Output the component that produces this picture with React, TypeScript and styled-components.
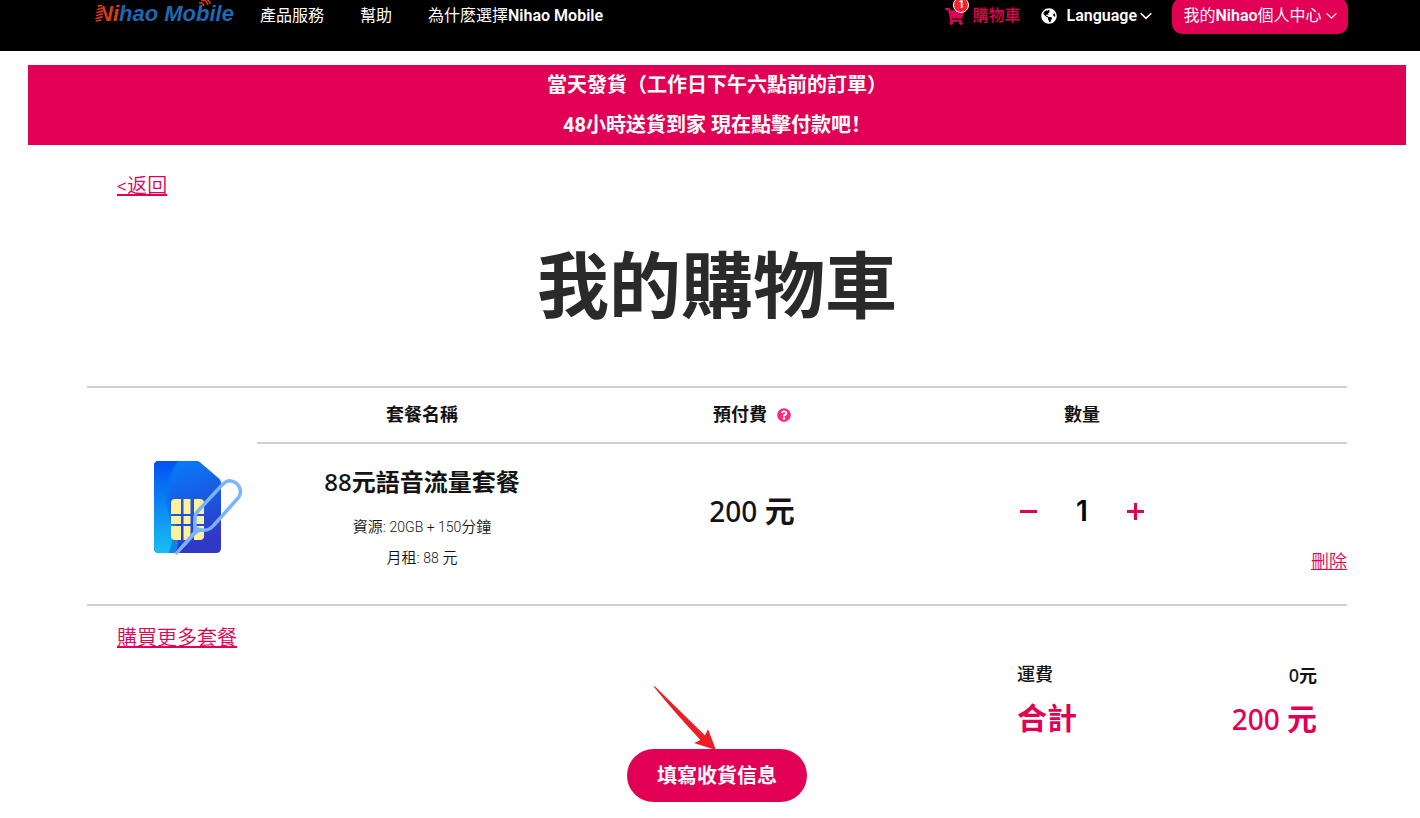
import React, { useState } from 'react';
import styled, { createGlobalStyle } from 'styled-components';
import { FaShoppingCart, FaGlobeAmericas, FaQuestionCircle } from 'react-icons/fa';

const PINK = '#e20054';
const LINE = '#d0d0d0';

const GlobalStyle = createGlobalStyle`
  *, *::before, *::after { box-sizing: border-box; }
  body {
    margin: 0;
    background: #fff;
    color: #141414;
    font-family: Roboto, "Noto Sans CJK SC", sans-serif;
    font-size: 16px;
    line-height: 24px;
  }
  button { font: inherit; color: inherit; border: 0; background: none; padding: 0; cursor: pointer; }
  h1, h2, p, dl, dd, dt { margin: 0; }
`;

const Header = styled.header`
  height: 51px;
  padding: 0 72px 0 95px;
  background: #000;
  color: #fff;
  overflow: hidden;
`;

const HeaderRow = styled.div`
  display: flex;
  align-items: center;
  height: 36px;
  margin-top: -2px;
`;

const LogoLink = styled.a`
  display: block;
  height: 30px;
  margin-right: 25px;
`;

const Nav = styled.nav`
  display: flex;
  gap: 36px;
`;

const NavLink = styled.a`
  color: #fff;
  text-decoration: none;
  white-space: nowrap;
`;

const Latin = styled.span`
  font-weight: 600;
`;

const Actions = styled.div`
  display: flex;
  align-items: center;
  margin-left: auto;
  white-space: nowrap;
`;

const CartLink = styled.a`
  position: relative;
  display: flex;
  align-items: center;
  gap: 8px;
  margin-right: 21px;
  color: ${PINK};
  font-weight: 500;
  text-decoration: none;
`;

const Badge = styled.span`
  position: absolute;
  top: -7px;
  left: 8px;
  width: 16px;
  height: 16px;
  border: 1px solid #fff;
  border-radius: 50%;
  background: #f8202c;
  color: #fff;
  font-size: 11px;
  font-weight: 600;
  line-height: 14px;
  text-align: center;
`;

const LanguageButton = styled.button`
  display: flex;
  align-items: center;
  margin-right: 20px;
  font-weight: 600;
`;

const LanguageText = styled.span`
  margin: 0 3px 0 9px;
`;

const AccountButton = styled.button`
  display: flex;
  align-items: center;
  justify-content: center;
  gap: 4px;
  width: 176px;
  height: 36px;
  border-radius: 10px;
  background: ${PINK};
`;

const Page = styled.main`
  padding: 14px 14px 16px 28px;
`;

const Banner = styled.div`
  background: ${PINK};
  color: #fff;
  font-size: 20px;
  font-weight: 700;
  line-height: 40px;
  text-align: center;
`;

const Container = styled.div`
  max-width: 1260px;
  margin: 0 auto;
`;

const LinkRow = styled.div<{ $top: number }>`
  padding: ${(p) => p.$top}px 30px 0;
  font-size: 20px;
  line-height: 24px;
`;

const PinkLink = styled.a`
  color: ${PINK};
  font-weight: 350;
  text-underline-offset: 1px;
`;

const Title = styled.h1`
  padding: 39px 0 47px;
  color: #2a2a2a;
  font-size: 72px;
  font-weight: 700;
  line-height: 102px;
  text-align: center;
`;

const CartTable = styled.table`
  width: 100%;
  border-top: 2px solid ${LINE};
  border-bottom: 2px solid ${LINE};
  border-spacing: 0;
  table-layout: fixed;
`;

const HeadCell = styled.th`
  height: 56px;
  padding: 0;
  border-bottom: 2px solid ${LINE};
  font-size: 18px;
  font-weight: 600;
  text-align: center;
`;

const HeadLabel = styled.div`
  display: flex;
  align-items: center;
  justify-content: center;
  gap: 10px;
`;

const HelpButton = styled.button`
  display: flex;
  color: #fb2a7b;
`;

const PictureCell = styled.td`
  padding: 72px 0 0 66px;
  vertical-align: top;
`;

const Cell = styled.td<{ $bottom?: number }>`
  height: 160px;
  padding: 0 0 ${(p) => p.$bottom ?? 26}px;
  text-align: center;
  vertical-align: middle;
`;

const RemoveCell = styled.td`
  padding: 0 0 30px;
  font-size: 18px;
  text-align: right;
  vertical-align: bottom;
`;

const PlanName = styled.h2`
  padding: 0 0 14px;
  font-family: "Noto Sans", "Noto Sans CJK SC", sans-serif;
  font-size: 24px;
  font-weight: 500;
  line-height: 32px;
`;

const PlanInfo = styled.p`
  font-size: 15px;
  font-weight: 350;
  line-height: 31px;
`;

const Small = styled.span`
  font-size: 14px;
  font-weight: 300;
`;

const Price = styled.span`
  font-family: "Noto Sans", sans-serif;
  font-size: 28px;
  font-weight: 500;
  line-height: 40px;
`;

const Unit = styled.span<{ $size?: number }>`
  font-family: "Noto Sans CJK SC", sans-serif;
  font-size: ${(p) => (p.$size ? `${p.$size}px` : 'inherit')};
  font-weight: 700;
  line-height: 1;
`;

const Stepper = styled.div`
  display: flex;
  align-items: center;
  justify-content: center;
`;

const StepButton = styled.button`
  display: flex;
  color: ${PINK};
`;

const Quantity = styled.output`
  width: 90px;
  color: #000;
  font-family: Inter, sans-serif;
  font-size: 28px;
  font-weight: 600;
  line-height: 40px;
`;

const Summary = styled.dl`
  width: 300px;
  margin: 13px 30px 0 auto;
`;

const SummaryRow = styled.div<{ $total?: boolean }>`
  display: flex;
  justify-content: space-between;
  height: ${(p) => (p.$total ? 40 : 24)}px;
  color: ${(p) => (p.$total ? PINK : '#141414')};
  font-size: ${(p) => (p.$total ? 30 : 18)}px;
  font-weight: ${(p) => (p.$total ? 700 : 500)};
  line-height: ${(p) => (p.$total ? 40 : 24)}px;
  margin-bottom: ${(p) => (p.$total ? 0 : 12)}px;
`;

const Amount = styled.dd<{ $total?: boolean }>`
  font-family: "Noto Sans", sans-serif;
  font-size: ${(p) => (p.$total ? 28 : 18)}px;
  font-weight: 500;
`;

const SubmitArea = styled.div`
  position: relative;
  width: 180px;
  margin: 10px auto 0;
`;

const SubmitButton = styled.button`
  width: 100%;
  height: 53px;
  border-radius: 27px;
  background: ${PINK};
  color: #fff;
  font-size: 20px;
  font-weight: 700;
`;

const Pointer = styled.svg`
  position: absolute;
  top: -64px;
  left: 26px;
  pointer-events: none;
`;

const Logo = () => (
  <svg width="140" height="30" viewBox="0 0 140 30" overflow="visible" role="img" aria-label="Nihao Mobile">
    <text x="2" y="20" fontFamily="Liberation Sans, Arial, sans-serif" fontSize="22" fontWeight="700" fontStyle="italic">
      <tspan fill="#dc3a1a">Ni</tspan>
      <tspan fill="#1e68b4">hao Mobile</tspan>
    </text>
    <path d="M3.500 5h4M2.500 8.500l6-1.500M2 11.500l6-1.500M1.500 14.500l6-1.500M1 17.500l6-1.500M1.500 20l4-1" stroke="#dc3a1a" strokeWidth="1.800" strokeLinecap="round" />
    <path d="M1 7l7-1.500M1 10l7-1.500M1 13l6.500-1.500M0 16l7-1.500M0 19l6-1.500" stroke="#000" strokeWidth="1" />
    <path d="M104 2q4-1 5 3M106 -1q6 0 7 5M110 -2q5 1 5 5" fill="none" stroke="#dc3a1a" strokeWidth="1.500" />
  </svg>
);

const Chevron = ({ width = 12, stroke = 1.6 }: { width?: number; stroke?: number }) => (
  <svg width={width} height="8" viewBox="0 0 12 8" fill="none" stroke="currentColor" strokeWidth={stroke} aria-hidden="true">
    <path d="M.7 1.200L6 6.400l5.300-5.200" />
  </svg>
);

const SimCard = () => (
  <svg width="90" height="96" viewBox="0 0 90 96" role="img" aria-label="SIM卡">
    <defs>
      <linearGradient id="sim-body" x1="0" y1="0" x2="0.300" y2="1">
        <stop offset="0" stopColor="#0084ff" />
        <stop offset="1" stopColor="#3038c8" />
      </linearGradient>
      <linearGradient id="sim-side" x1="0" y1="0" x2="0" y2="1">
        <stop offset="0" stopColor="#0050f0" />
        <stop offset="1" stopColor="#18c0f4" />
      </linearGradient>
      <linearGradient id="sim-edge" x1="0" y1="0" x2="0" y2="1">
        <stop offset="0" stopColor="#0068f8" />
        <stop offset="1" stopColor="#1088e0" />
      </linearGradient>
      <clipPath id="sim-clip">
        <path d="M6 1H43.500Q45.500 1 47 2.200L66 18.500Q68 20.500 68 23V88Q68 93 63 93H6Q1 93 1 88V6Q1 1 6 1Z" />
      </clipPath>
    </defs>
    <g clipPath="url(#sim-clip)">
      <rect x="1" y="1" width="67" height="92" fill="url(#sim-body)" />
      <path d="M0 0H27Q15 14 16 38Q17 54 23 66Q28 80 22 94H0Z" fill="url(#sim-edge)" />
      <path d="M0 0H25Q10 20 13 44Q18 62 20 72Q20 84 15 94H0Z" fill="url(#sim-side)" />
    </g>
    <g fill="#fff09c">
      <path d="M22 39H28V54H18V43Q18 39 22 39ZM30.500 39H37.500V54H30.500ZM41 39H47Q51 39 51 43V54H41ZM18 56H28V64H18ZM30.500 56H37.500V64H30.500ZM41 56H51V64H41ZM18 66H28V80H22Q18 80 18 76ZM30.500 66H37.500V80H30.500ZM41 66H51V76Q51 80 47 80H41Z" />
    </g>
    <path d="M42 71Q42 66 42 58Q42 54 45 51L70 24Q76 18 83 23Q90 29 86 37L61 65Q56 71 49 70Z" fill="none" stroke="#7ab4ff" strokeWidth="3.500" strokeLinejoin="round" />
    <path d="M40.500 62Q43 69 50 69L49 71.500Q46 71 44 73L24 94.500L22 93L42 70Z" fill="#7ab4ff" stroke="#7ab4ff" />
  </svg>
);

const Minus = () => (
  <svg width="17" height="17" viewBox="0 0 17 17" aria-hidden="true">
    <path d="M0 7H17V10H0Z" fill="currentColor" />
  </svg>
);

const Plus = () => (
  <svg width="17" height="17" viewBox="0 0 17 17" aria-hidden="true">
    <path d="M0 7H7V0H10V7H17V10H10V17H7V10H0Z" fill="currentColor" />
  </svg>
);

export default function App() {
  const [count, setCount] = useState(1);
  const total = 200 * count;

  return (
    <>
      <GlobalStyle />
      <Header>
        <HeaderRow>
          <LogoLink href="#home"><Logo /></LogoLink>
          <Nav>
            <NavLink href="#products">產品服務</NavLink>
            <NavLink href="#help">幫助</NavLink>
            <NavLink href="#why">為什麽選擇<Latin>Nihao Mobile</Latin></NavLink>
          </Nav>
          <Actions>
            <CartLink href="#cart">
              <FaShoppingCart size={19} />
              <Badge>{count}</Badge>
              <span>購物車</span>
            </CartLink>
            <LanguageButton type="button">
              <FaGlobeAmericas size={16} />
              <LanguageText>Language</LanguageText>
              <Chevron />
            </LanguageButton>
            <AccountButton type="button">
              <span>我的<Latin>Nihao</Latin>個人中心</span>
              <Chevron width={11} stroke={1.3} />
            </AccountButton>
          </Actions>
        </HeaderRow>
      </Header>
      <Page>
        <Banner>
          <p>當天發貨（工作日下午六點前的訂單）</p>
          <p>48小時送貨到家 現在點擊付款吧！</p>
        </Banner>
        <Container>
          <LinkRow $top={29}><PinkLink href="#back">&lt;返回</PinkLink></LinkRow>
          <Title>我的購物車</Title>
          <CartTable>
            <colgroup>
              <col style={{ width: 170 }} />
              <col />
              <col />
              <col />
              <col style={{ width: 100 }} />
            </colgroup>
            <tbody>
              <tr>
                <PictureCell rowSpan={2}><SimCard /></PictureCell>
                <HeadCell scope="col">套餐名稱</HeadCell>
                <HeadCell scope="col">
                  <HeadLabel>
                    預付費
                    <HelpButton type="button" aria-label="預付費說明"><FaQuestionCircle size={14} /></HelpButton>
                  </HeadLabel>
                </HeadCell>
                <HeadCell scope="col">數量</HeadCell>
                <HeadCell as="td" />
              </tr>
              <tr>
                <Cell $bottom={8}>
                  <PlanName>88<Unit>元語音流量套餐</Unit></PlanName>
                  <PlanInfo>資源: <Small>20GB + 150</Small>分鐘</PlanInfo>
                  <PlanInfo>月租: <Small>88</Small> 元</PlanInfo>
                </Cell>
                <Cell><Price>200 <Unit $size={30}>元</Unit></Price></Cell>
                <Cell>
                  <Stepper>
                    <StepButton type="button" aria-label="減少" onClick={() => setCount(Math.max(1, count - 1))}><Minus /></StepButton>
                    <Quantity>{count}</Quantity>
                    <StepButton type="button" aria-label="增加" onClick={() => setCount(count + 1)}><Plus /></StepButton>
                  </Stepper>
                </Cell>
                <RemoveCell><PinkLink href="#remove">刪除</PinkLink></RemoveCell>
              </tr>
            </tbody>
          </CartTable>
          <LinkRow $top={20}><PinkLink href="#more">購買更多套餐</PinkLink></LinkRow>
          <Summary>
            <SummaryRow><dt>運費</dt><Amount>0<Unit>元</Unit></Amount></SummaryRow>
            <SummaryRow $total><dt>合計</dt><Amount $total>{total} <Unit $size={30}>元</Unit></Amount></SummaryRow>
          </Summary>
          <SubmitArea>
            <SubmitButton type="button">填寫收貨信息</SubmitButton>
            <Pointer width="64" height="66" viewBox="0 0 64 66" aria-hidden="true">
              <path d="M1.500 1L52 50.500L55 44L63 65L41 58L47.500 55Q22 28 1 2Z" fill="#ee1c24" />
            </Pointer>
          </SubmitArea>
        </Container>
      </Page>
    </>
  );
}
